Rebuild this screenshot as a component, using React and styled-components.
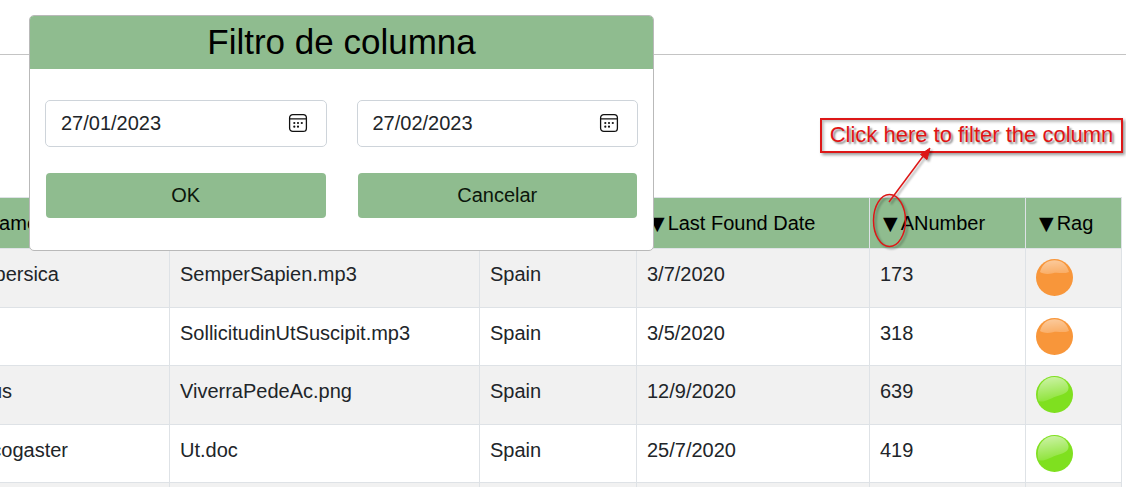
import React from "react";
import styled, { createGlobalStyle } from "styled-components";

const GlobalStyle = createGlobalStyle`
  *, *::before, *::after { box-sizing: border-box; }
  body {
    margin: 0;
    background: #fff;
    color: #212529;
    font-family: "Liberation Sans", Arial, sans-serif;
    font-size: 20px;
    line-height: 30px;
  }
`;

const Page = styled.main`
  position: relative;
  height: 100vh;
  overflow: hidden;
`;

const TopBar = styled.header`
  height: 55px;
  border-bottom: 1px solid #c4c4c4;
`;

const TableArea = styled.section`
  padding: 142px 4px 0 0;
`;

const Table = styled.table`
  width: 100%;
  table-layout: fixed;
  border-collapse: collapse;
`;

const Col = styled.col`
  width: ${({ $width }) => ($width ? `${$width}px` : "auto")};
`;

const HeadCell = styled.th`
  height: 51px;
  padding: 10px 0 10px 10px;
  border: 1px solid #dee2e6;
  background: #8fbc8f;
  color: #000;
  font-weight: 400;
  text-align: left;
  vertical-align: top;
  white-space: nowrap;

  &:first-child { padding-left: 0; border-left: 0; }
`;

const Row = styled.tr`
  height: 58px;
  background: #fff;

  &:nth-child(odd) { height: 59px; background: #f1f1f1; }
`;

const Cell = styled.td`
  padding: 10px 0 10px 10px;
  border: 1px solid #dee2e6;
  vertical-align: top;
  white-space: nowrap;

  &:first-child { padding-left: 0; border-left: 0; }
`;

const CutText = styled.span`
  display: flex;
  justify-content: flex-end;
  width: ${({ $width }) => $width}px;
`;

const FilterButton = styled.button`
  margin: 0 3px;
  padding: 0;
  border: 0;
  background: none;
  color: inherit;
  font-family: "DejaVu Sans", sans-serif;
  font-size: 19px;
  line-height: 24px;
  cursor: pointer;
`;

const Orb = styled.svg`
  display: block;
  width: 37px;
  height: 37px;
`;

const Dialog = styled.form`
  position: absolute;
  top: 15px;
  left: 29px;
  width: 625px;
  max-width: 100%;
  overflow: hidden;
  border: 1px solid #b9b9b9;
  border-radius: 5px;
  background: #fff;
`;

const DialogTitle = styled.h1`
  margin: 0;
  padding: 6px 0 7px;
  background: #8fbc8f;
  color: #000;
  font-size: 35px;
  font-weight: 400;
  line-height: 40px;
  text-align: center;
`;

const DialogBody = styled.div`
  display: grid;
  grid-template-columns: repeat(2, minmax(0, 1fr));
  gap: 26px 30px;
  padding: 31px 15px 32px;
`;

const DateField = styled.div`
  display: flex;
  align-items: center;
  height: 47px;
  padding: 0 18px 2px 15px;
  border: 1px solid #ced4da;
  border-radius: 5px;
  background: #fff;
`;

const DateInput = styled.input`
  flex: 1;
  width: 100%;
  min-width: 0;
  padding: 0;
  border: 0;
  outline: 0;
  background: none;
  color: #212529;
  font: inherit;
`;

const CalendarButton = styled.button`
  padding: 0;
  border: 0;
  background: none;
  line-height: 0;
  cursor: pointer;
`;

const ActionButton = styled.button`
  height: 45px;
  margin: 0 1px;
  padding: 0 0 2px;
  border: 0;
  border-radius: 4px;
  background: #8fbc8f;
  color: #0b160b;
  font: inherit;
  cursor: pointer;
`;

const Callout = styled.div`
  position: absolute;
  top: 118px;
  right: 3px;
  width: 303px;
  height: 35px;
  border: 2px solid #dd1717;
  color: #e01414;
  font-size: 22px;
  line-height: 30px;
  text-align: center;
  white-space: nowrap;
  text-shadow: 2px 2px 2px rgba(0, 0, 0, 0.45);
  box-shadow: 2px 2px 3px rgba(0, 0, 0, 0.4), inset 2px 2px 3px rgba(0, 0, 0, 0.25);
`;

const Pointer = styled.svg`
  position: absolute;
  top: 140px;
  right: 186px;
  width: 70px;
  height: 115px;
  pointer-events: none;
  filter: drop-shadow(2px 2px 1px rgba(0, 0, 0, 0.35));
`;

function CalendarIcon() {
  return (
    <svg width="20" height="20" viewBox="0 0 20 20" fill="none" stroke="#111" aria-hidden="true">
      <rect x="1.6" y="1.6" width="16.8" height="16.8" rx="3.2" strokeWidth="1.3" />
      <path d="M2 5.8H18" strokeWidth="1.3" />
      <g fill="#111" stroke="none">
        <circle cx="6.3" cy="10" r="1.1" />
        <circle cx="10" cy="10" r="1.1" />
        <circle cx="13.8" cy="10" r="1.1" />
        <circle cx="6.3" cy="13.7" r="1.1" />
        <circle cx="10" cy="13.7" r="1.1" />
      </g>
    </svg>
  );
}

function StatusOrb({ status, id }) {
  const amber = status === "amber";
  return (
    <Orb viewBox="0 0 37 37" role="img" aria-label={status}>
      <defs>
        <linearGradient id={id} x1="0.3" y1="0" x2="0.5" y2="1">
          <stop offset="0" stopColor="#fff" stopOpacity={amber ? 0.5 : 0.6} />
          <stop offset="1" stopColor="#fff" stopOpacity={amber ? 0.22 : 0.1} />
        </linearGradient>
      </defs>
      <circle cx="18.5" cy="18.5" r="18.5" fill={amber ? "#f8963a" : "#7fe01f"} />
      {amber ? (
        <path d="M4 13C6 5 12 1.3 18.5 1.3S31 5 33 13C27 15.5 22 12.8 17 14.2C11 15.8 6 14.5 4 13Z" fill={`url(#${id})`} />
      ) : (
        <path d="M2.500 25C-1 11 8 1 18.5 1C25 1 31 4.5 32.500 11C33 17 27 18 20 20.5C13 23 8 27 2.500 25Z" fill={`url(#${id})`} />
      )}
    </Orb>
  );
}

function FilterDate({ label, value }) {
  return (
    <DateField>
      <DateInput type="text" aria-label={label} defaultValue={value} />
      <CalendarButton type="button" aria-label="Calendario">
        <CalendarIcon />
      </CalendarButton>
    </DateField>
  );
}

function FilterHead({ children }) {
  return (
    <HeadCell scope="col">
      <FilterButton type="button">▼</FilterButton>
      {children}
    </HeadCell>
  );
}

const columnWidths = [null, 310, 157, 233, 156, 96];

const rows = [
  { name: "persica", cut: 59, file: "SemperSapien.mp3", country: "Spain", date: "3/7/2020", number: 173, rag: "amber" },
  { name: "", cut: 0, file: "SollicitudinUtSuscipit.mp3", country: "Spain", date: "3/5/2020", number: 318, rag: "amber" },
  { name: "us", cut: 12, file: "ViverraPedeAc.png", country: "Spain", date: "12/9/2020", number: 639, rag: "green" },
  { name: "cogaster", cut: 68, file: "Ut.doc", country: "Spain", date: "25/7/2020", number: 419, rag: "green" },
];

export default function App() {
  return (
    <Page>
      <GlobalStyle />
      <TopBar />
      <TableArea>
        <Table>
          <colgroup>
            {columnWidths.map((width, i) => (
              <Col key={i} $width={width} />
            ))}
          </colgroup>
          <thead>
            <tr>
              <HeadCell scope="col">
                <CutText $width={38}>ame</CutText>
              </HeadCell>
              <HeadCell />
              <HeadCell />
              <FilterHead>Last Found Date</FilterHead>
              <FilterHead>ANumber</FilterHead>
              <FilterHead>Rag</FilterHead>
            </tr>
          </thead>
          <tbody>
            {rows.map((row, i) => (
              <Row key={row.file}>
                <Cell>
                  <CutText $width={row.cut}>{row.name}</CutText>
                </Cell>
                <Cell>{row.file}</Cell>
                <Cell>{row.country}</Cell>
                <Cell>{row.date}</Cell>
                <Cell>{row.number}</Cell>
                <Cell>
                  <StatusOrb status={row.rag} id={`gloss-${i}`} />
                </Cell>
              </Row>
            ))}
            <Row>
              {columnWidths.map((_, i) => (
                <Cell key={i} />
              ))}
            </Row>
          </tbody>
        </Table>
      </TableArea>

      <Dialog onSubmit={(e) => e.preventDefault()}>
        <DialogTitle>Filtro de columna</DialogTitle>
        <DialogBody>
          <FilterDate label="Desde" value="27/01/2023" />
          <FilterDate label="Hasta" value="27/02/2023" />
          <ActionButton type="submit">OK</ActionButton>
          <ActionButton type="button">Cancelar</ActionButton>
        </DialogBody>
      </Dialog>

      <Callout>Click here to filter the column</Callout>
      <Pointer viewBox="0 0 70 115" fill="none" stroke="#dd1717" strokeWidth="1.5" aria-hidden="true">
        <ellipse cx="19.5" cy="80.5" rx="16" ry="26" />
        <path d="M19 62L54 15" />
        <path d="M60 8L57 19.5L50.500 14.500Z" fill="#dd1717" strokeWidth="1" />
      </Pointer>
    </Page>
  );
}
